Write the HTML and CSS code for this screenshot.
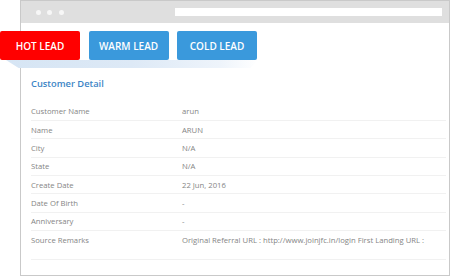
FILE: index.html
```html
<!DOCTYPE html>
<html>
<head>
<meta charset="utf-8">
<link rel="stylesheet" href="styles.css">
</head>
<body>
<div class="stage">
  <div class="frame">
    <div class="titlebar">
      <div class="dots"><span class="dot"></span><span class="dot"></span><span class="dot"></span></div>
      <div class="address"></div>
    </div>
    <div class="content">
      <h2 class="heading">Customer Detail</h2>
      <div class="table">
        <div class="row"><div class="label">Customer Name</div><div class="value">arun</div></div>
        <div class="row"><div class="label">Name</div><div class="value">ARUN</div></div>
        <div class="row"><div class="label">City</div><div class="value">N/A</div></div>
        <div class="row"><div class="label">State</div><div class="value">N/A</div></div>
        <div class="row"><div class="label">Create Date</div><div class="value">22 Jun, 2016</div></div>
        <div class="row"><div class="label">Date Of Birth</div><div class="value">-</div></div>
        <div class="row"><div class="label">Anniversary</div><div class="value">-</div></div>
        <div class="row row-tall"><div class="label">Source Remarks</div><div class="value">Original Referral URL : http://www.joinjfc.in/login First Landing URL :</div></div>
      </div>
    </div>
  </div>
  <div class="leads">
    <div class="shadow"></div>
    <button class="lead hot">HOT LEAD</button>
    <button class="lead warm">WARM LEAD</button>
    <button class="lead cold">COLD LEAD</button>
  </div>
</div>
</body>
</html>
```
FILE: styles.css
```css
* { box-sizing: border-box; }
html, body { margin: 0; padding: 0; background: #fff; }
body { font-family: "Open Sans", "Liberation Sans", sans-serif; width: 451px; height: 276px; overflow: hidden; }
.stage { position: relative; width: 451px; height: 276px; }
.frame {
  margin-left: 20px;
  width: 430px;
  height: 276px;
  border: 1px solid #c9c9c9;
  display: flex;
  flex-direction: column;
  background: #fff;
}
.titlebar {
  height: 22px;
  background: #dfdfdf;
  display: flex;
  align-items: center;
  padding-left: 14.5px;
  padding-right: 7px;
  flex-shrink: 0;
}
.dots { display: flex; gap: 6.5px; }
.dot { width: 5px; height: 5px; border-radius: 50%; background: #f7f7f7; }
.address { margin-left: auto; width: 267px; height: 8px; background: #fff; }
.content { padding: 54px 3px 0 10px; }
.heading {
  margin: 0;
  font-size: 9.3px;
  line-height: 14px;
  font-weight: 600;
  color: #3d85c6;
}
.table { margin-top: 11.7px; }
.row {
  display: flex;
  height: 18.33px;
  border-bottom: 1px solid #f1f1f1;
  align-items: center;
  font-size: 7.7px;
  color: #858585;
}
.label { width: 151px; flex-shrink: 0; }
.value { flex: 1; white-space: nowrap; }
.row-tall { height: 29px; align-items: flex-start; padding-top: 4px; }
.leads {
  position: absolute;
  left: 0;
  top: 31px;
  display: flex;
  gap: 8.5px;
}
.shadow {
  position: absolute;
  left: 6px;
  top: 29px;
  width: 252px;
  height: 8px;
  background: linear-gradient(90deg, #d6e5f4 0%, #dde9f6 50%, #eef4fb 85%, rgba(255,255,255,0) 100%);
  clip-path: polygon(0 0, 100% 0, 97% 100%, 5% 100%);
  z-index: 0;
}
.lead {
  position: relative;
  z-index: 1;
  width: 80px;
  height: 29px;
  border: 0;
  border-radius: 2px;
  color: #fff;
  font-family: "Open Sans", "Liberation Sans", sans-serif;
  font-size: 10px;
  font-weight: 600;
  padding: 0;
  margin: 0;
}
.hot { background: #ff0000; }
.warm { background: #3a99dc; }
.cold { background: #3a99dc; }
```
